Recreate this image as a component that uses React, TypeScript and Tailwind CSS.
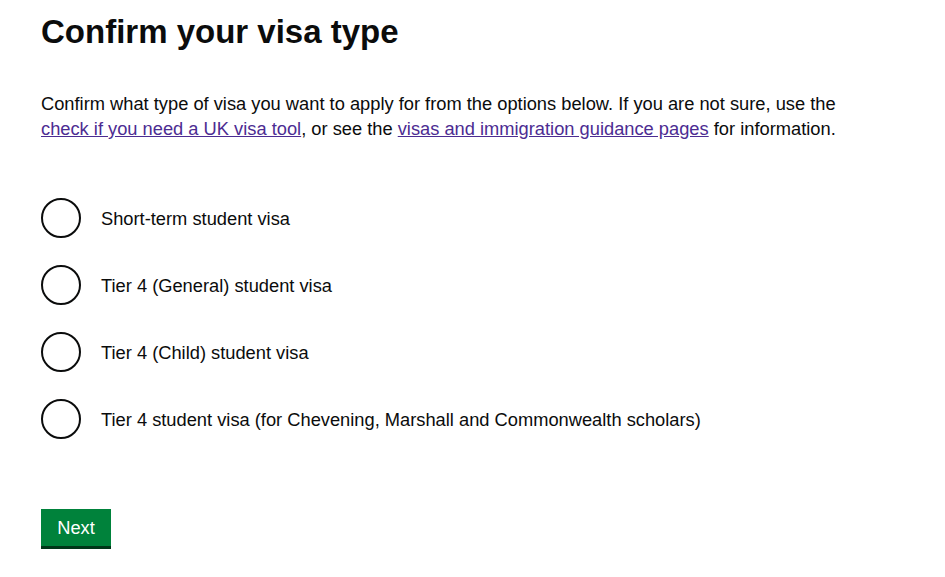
import React from "react";

const options = [
  "Short-term student visa",
  "Tier 4 (General) student visa",
  "Tier 4 (Child) student visa",
  "Tier 4 student visa (for Chevening, Marshall and Commonwealth scholars)",
];

export default function App() {
  return (
    <div
      className="min-h-screen bg-white px-[41px] pt-[12px] text-[#0b0c0c]"
      style={{ fontFamily: '"Liberation Sans", Arial, sans-serif' }}
    >
      <h1 className="text-[33px] font-bold leading-[40px]">Confirm your visa type</h1>

      <p className="mt-[39px] w-[820px] text-[18.3px] leading-[25px]">
        Confirm what type of visa you want to apply for from the options below. If you are not sure, use the{" "}
        <a href="#" className="text-[#4c2c92] underline">
          check if you need a UK visa tool
        </a>
        , or see the{" "}
        <a href="#" className="text-[#4c2c92] underline">
          visas and immigration guidance pages
        </a>{" "}
        for information.
      </p>

      <div className="mt-[57px] flex flex-col gap-[27px]">
        {options.map((label) => (
          <label key={label} className="flex items-center gap-[20px]">
            <span className="h-[40px] w-[40px] shrink-0 rounded-full border-2 border-[#0b0c0c]" />
            <span className="text-[18.3px] leading-[25px]">{label}</span>
          </label>
        ))}
      </div>

      <button className="mt-[70px] h-[37px] w-[70px] bg-[#00823b] text-[18.3px] leading-[25px] text-white shadow-[0_3px_0_#003618]">
        Next
      </button>
    </div>
  );
}
